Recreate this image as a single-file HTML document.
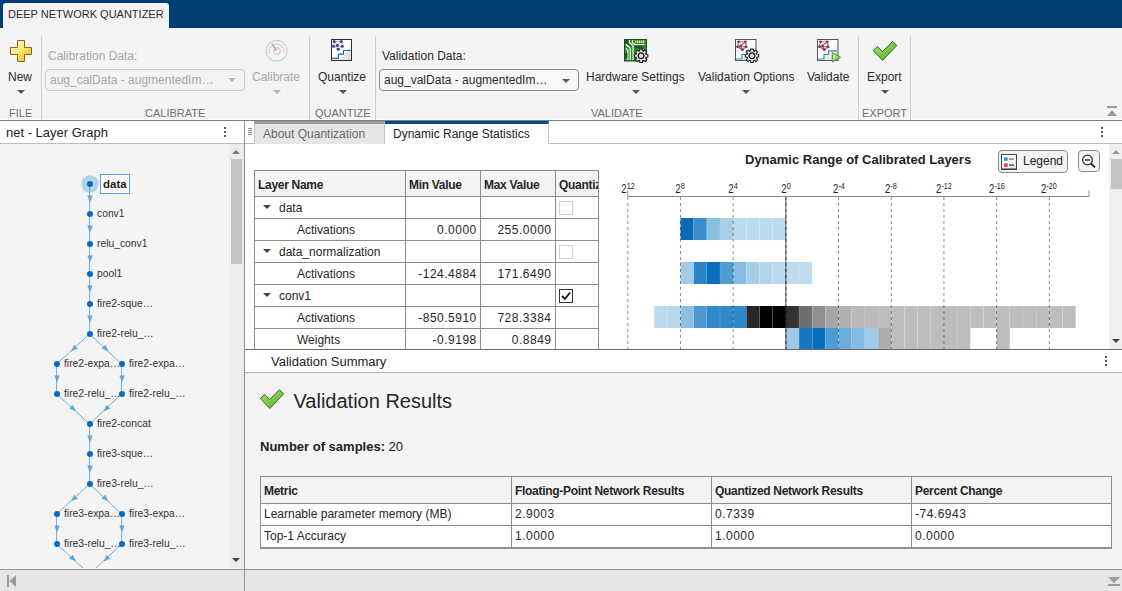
<!DOCTYPE html><html><head><meta charset="utf-8"><style>
*{box-sizing:border-box;margin:0;padding:0}
html,body{width:1122px;height:591px;overflow:hidden;background:#f4f4f4;font-family:"Liberation Sans",sans-serif;color:#333}
.a{position:absolute}
.t{position:absolute;white-space:nowrap;line-height:1}
.sep{position:absolute;top:36px;width:1px;height:84px;background:#cfcfcf}
.lbl{font-size:12px;color:#2b2b2b}
.grp{font-size:11px;color:#6e6e6e}
.dis{color:#a8a8a8}
.tri{position:absolute;width:0;height:0;border-left:4px solid transparent;border-right:4px solid transparent;border-top:4px solid #555}
.combo{position:absolute;height:22px;border:1px solid #8a8a8a;border-radius:4px;background:#f7f7f7}
.gl{font-size:10.3px;color:#333}
.tb{font-size:12px;color:#262626}
.hl{position:absolute;height:1px;background:#8c8c8c}
.vl{position:absolute;width:1px;background:#8c8c8c}
</style></head><body>
<div class="a" style="left:0;top:0;width:1122px;height:28px;background:#003e73"></div>
<div class="a" style="left:3px;top:3px;width:166px;height:25px;background:#f3f3f3;border-radius:3px 3px 0 0"></div>
<div class="t" style="left:8px;top:9px;font-size:11px;color:#2e2e2e">DEEP NETWORK QUANTIZER</div>
<div class="a" style="left:0;top:119px;width:1122px;height:1px;background:#fbfbfb"></div><div class="a" style="left:0;top:120px;width:1122px;height:1px;background:#7e7e7e"></div>
<div class="sep" style="left:41px"></div>
<div class="sep" style="left:309px"></div>
<div class="sep" style="left:375px"></div>
<div class="sep" style="left:858px"></div>
<div class="sep" style="left:910px"></div>
<svg class="a" style="left:0;top:0" width="1122" height="121" viewBox="0 0 1122 121">
<defs>
<linearGradient id="gy" x1="0" y1="0" x2="1" y2="1"><stop offset="0" stop-color="#fffbe6"/><stop offset="0.45" stop-color="#fbe77a"/><stop offset="1" stop-color="#e3b620"/></linearGradient>
<linearGradient id="gg" x1="0" y1="0" x2="1" y2="1"><stop offset="0" stop-color="#b6e27a"/><stop offset="0.5" stop-color="#7cc84a"/><stop offset="1" stop-color="#5aa832"/></linearGradient>
<linearGradient id="gb" x1="0" y1="0" x2="1" y2="1"><stop offset="0.5" stop-color="#ffffff"/><stop offset="1" stop-color="#d0d0d0"/></linearGradient>
<linearGradient id="gp" x1="0" y1="0" x2="1" y2="1"><stop offset="0" stop-color="#d8f0a0"/><stop offset="1" stop-color="#6cbf3a"/></linearGradient>
<g id="gear"><path d="M-1.49,-4.88 L-1.30,-6.68 L1.30,-6.68 L1.49,-4.88 L2.39,-4.50 L3.80,-5.64 L5.64,-3.80 L4.50,-2.39 L4.88,-1.49 L6.68,-1.30 L6.68,1.30 L4.88,1.49 L4.50,2.39 L5.64,3.80 L3.80,5.64 L2.39,4.50 L1.49,4.88 L1.30,6.68 L-1.30,6.68 L-1.49,4.88 L-2.39,4.50 L-3.80,5.64 L-5.64,3.80 L-4.50,2.39 L-4.88,1.49 L-6.68,1.30 L-6.68,-1.30 L-4.88,-1.49 L-4.50,-2.39 L-5.64,-3.80 L-3.80,-5.64 L-2.39,-4.50 Z" fill="#e6e6e6" stroke="#262626" stroke-width="1.1"/><circle r="2.9" fill="#d6d6d6" stroke="#111" stroke-width="1.3"/></g>
<g id="net"><g stroke="#e8553f" stroke-width="0.9" stroke-dasharray="1.5 0.6" fill="none"><path d="M3.2,2.2 L10.3,2.2 L11.3,7 L7.2,10.1 L2.5,7 Z M3.2,2.2 L6.3,6 L10.3,2.2 M2.5,7 L11.3,7 M6.3,6 L7.2,10.1"/></g>
<g fill="#1d4f8f"><circle cx="3.2" cy="2.2" r="1.5"/><circle cx="10.3" cy="2.2" r="1.5"/><circle cx="2.5" cy="7" r="1.5"/><circle cx="6.3" cy="6" r="1.5"/><circle cx="11.3" cy="7" r="1.5"/><circle cx="7.2" cy="10.1" r="1.5"/></g></g>
<g id="net2"><g stroke="#e4452f" stroke-width="1.1" fill="none"><path d="M3.3,2.5 L10.1,2.5 M3.3,2.5 L2.2,7.5 L7,10.5 L11,7.5 L10.1,2.5 M2.2,7.5 L11,7.5 M5.3,6.4 L10.1,2.5 M5.3,6.4 L7,10.5"/></g><path d="M3.3,2.5 L10.1,2.5" stroke="#f4a0a0" stroke-width="2"/>
<g fill="#1d4f8f"><circle cx="3.3" cy="2.5" r="1.3"/><circle cx="10.1" cy="2.5" r="1.3"/><circle cx="2.2" cy="7.5" r="1.3"/><circle cx="5.3" cy="6.4" r="1.3"/><circle cx="11" cy="7.5" r="1.3"/><circle cx="7" cy="10.5" r="1.3"/></g></g>
</defs>
<!-- New plus -->
<path d="M17.5,40.5 h7 v7 h7 v7 h-7 v7 h-7 v-7 h-7 v-7 h7 z" fill="url(#gy)" stroke="#8a6514" stroke-width="1"/>
<!-- calibrate gauge -->
<circle cx="276.7" cy="50.7" r="10.4" fill="#f6f6f6" stroke="#cdcdcd" stroke-width="1.2"/>
<path d="M269.5,53 A7.4,7.4 0 1 1 284,53" fill="none" stroke="#bdbdbd" stroke-width="1.2" stroke-dasharray="1.6 0.8"/>
<circle cx="277" cy="51" r="3.2" fill="none" stroke="#c8c8c8" stroke-width="1.2"/>
<line x1="271.8" y1="43.8" x2="276.5" y2="50.5" stroke="#ef9a9a" stroke-width="1.6"/>
<!-- Quantize -->
<rect x="331.5" y="39.5" width="20" height="21" fill="url(#gb)" stroke="#2e2e2e" stroke-width="1"/>
<path d="M332,58.3 H338.4 V54.2 H343.4 V50.5 H351" fill="none" stroke="#1f6fc0" stroke-width="1.2"/>
<use href="#net" x="331" y="39.2"/>
<!-- Hardware settings -->
<rect x="624.5" y="39.5" width="22" height="21.5" fill="#2d8a30" stroke="#14501a" stroke-width="1"/>
<rect x="625.3" y="40.3" width="2.8" height="3.2" fill="#3a3a3a"/>
<g fill="#e8e070"><rect x="635" y="40.5" width="1.3" height="2.5"/><rect x="637" y="40.5" width="1.3" height="2.5"/><rect x="639" y="40.5" width="1.3" height="2.5"/><rect x="641" y="40.5" width="1.3" height="2.5"/><rect x="643" y="40.5" width="1.3" height="2.5"/></g>
<g stroke="#ffffff" stroke-width="1.1" fill="none"><path d="M629.5,40 V42.5 L633,45.5 V60"/><path d="M632.5,40 V42.5 L634.5,44.5 H644.5"/><path d="M625.8,44.5 L630.2,48 V60"/><path d="M625.8,48.3 L627.8,50 V60"/></g>
<g fill="#333"><rect x="635.2" y="46.2" width="2" height="2"/><rect x="637.8" y="46.2" width="2" height="2"/><rect x="640.4" y="46.2" width="2" height="2"/><rect x="625.3" y="53" width="2" height="5"/></g>
<use href="#gear" x="641.1" y="55.8"/>
<!-- Validation options -->
<rect x="735.5" y="39.5" width="20.5" height="21" fill="url(#gb)" stroke="#555" stroke-width="1"/>
<path d="M736,59 H742 V54.5 H746.5 V50.8 H755" fill="none" stroke="#3a86cc" stroke-width="1.2"/>
<use href="#net2" x="735.3" y="39.3"/>
<use href="#gear" x="752" y="55.8"/>
<!-- Validate -->
<rect x="817.5" y="39.5" width="20.5" height="21" fill="url(#gb)" stroke="#555" stroke-width="1"/>
<path d="M818,59 H824 V54.5 H828.5 V50.8 H837" fill="none" stroke="#3a86cc" stroke-width="1.2"/>
<use href="#net2" x="817.2" y="39.3"/>
<path d="M832.3,52.5 L840.6,57.3 L832.3,62 Z" fill="url(#gp)" stroke="#3d8a2a" stroke-width="0.9"/>
<!-- Export check -->
<path d="M873.3,50.7 L877.4,46.4 L882.7,51.6 L892.6,41.3 L896.8,45.5 L882.6,60.4 Z" fill="url(#gg)" stroke="#2f6a1e" stroke-width="1"/>
<!-- collapse -->
<rect x="1107" y="106" width="10" height="2" fill="#9c9c9c"/>
<path d="M1107,116 L1112,110 L1117,116 Z" fill="#9c9c9c"/>
</svg>
<div class="t lbl" style="left:8px;top:71px">New</div>
<div class="tri" style="left:17px;top:90px"></div>
<div class="t grp" style="left:9px;top:108px">FILE</div>
<div class="t lbl dis" style="left:48px;top:50px">Calibration Data:</div>
<div class="combo" style="left:45px;top:69px;width:200px;border-color:#cdcdcd;background:#f3f3f3"></div>
<div class="t lbl dis" style="left:50px;top:74px">aug_calData - augmentedIm…</div>
<div class="tri" style="left:228px;top:78px;border-top-color:#b5b5b5"></div>
<div class="t lbl dis" style="left:252px;top:71px">Calibrate</div>
<div class="tri" style="left:273px;top:90px;border-top-color:#b5b5b5"></div>
<div class="t grp" style="left:145px;top:108px">CALIBRATE</div>
<div class="t lbl" style="left:318px;top:71px">Quantize</div>
<div class="tri" style="left:339px;top:90px"></div>
<div class="t grp" style="left:315px;top:108px">QUANTIZE</div>
<div class="t lbl" style="left:382px;top:50px">Validation Data:</div>
<div class="combo" style="left:379px;top:69px;width:200px"></div>
<div class="t lbl" style="left:384px;top:74px">aug_valData - augmentedIm…</div>
<div class="tri" style="left:562px;top:78.5px"></div>
<div class="t lbl" style="left:586px;top:71px">Hardware Settings</div>
<div class="tri" style="left:632px;top:90px"></div>
<div class="t lbl" style="left:698px;top:71px">Validation Options</div>
<div class="tri" style="left:742px;top:90px"></div>
<div class="t lbl" style="left:807px;top:71px">Validate</div>
<div class="t grp" style="left:591px;top:108px">VALIDATE</div>
<div class="t lbl" style="left:867px;top:71px">Export</div>
<div class="tri" style="left:881px;top:90px"></div>
<div class="t grp" style="left:862px;top:108px">EXPORT</div>
<div class="a" style="left:0;top:121px;width:244px;height:23px;background:#fff;border-bottom:1px solid #bdbdbd"></div>
<div class="t" style="left:6px;top:126px;font-size:13px;color:#222">net - Layer Graph</div>
<div class="a" style="left:224px;top:127px;width:2px;height:2px;background:#555"></div><div class="a" style="left:224px;top:131px;width:2px;height:2px;background:#555"></div><div class="a" style="left:224px;top:135px;width:2px;height:2px;background:#555"></div>
<div class="a" style="left:229px;top:144px;width:15px;height:424px;background:#ececec"></div>
<div class="a" style="left:231px;top:159px;width:11px;height:105px;background:#c4c4c4"></div>
<div class="tri" style="left:232px;top:150px;border-top:0;border-bottom:4px solid #777"></div>
<div class="tri" style="left:232px;top:558px;border-top-color:#444"></div>
<svg class="a" style="left:0;top:144px" width="229" height="424" viewBox="0 144 229 424"><circle cx="90" cy="184" r="8.8" fill="#b3d1e8"/><line x1="89.6" y1="184" x2="89.6" y2="214" stroke="#6eb0e0" stroke-width="1"/><path d="M90.00,202.50 L87.30,195.50 L92.70,195.50 Z" fill="#5ea6dc"/><line x1="89.6" y1="214" x2="89.6" y2="244" stroke="#6eb0e0" stroke-width="1"/><path d="M90.00,232.50 L87.30,225.50 L92.70,225.50 Z" fill="#5ea6dc"/><line x1="89.6" y1="244" x2="89.6" y2="274" stroke="#6eb0e0" stroke-width="1"/><path d="M90.00,262.50 L87.30,255.50 L92.70,255.50 Z" fill="#5ea6dc"/><line x1="89.6" y1="274" x2="89.6" y2="304" stroke="#6eb0e0" stroke-width="1"/><path d="M90.00,292.50 L87.30,285.50 L92.70,285.50 Z" fill="#5ea6dc"/><line x1="89.6" y1="304" x2="89.6" y2="334" stroke="#6eb0e0" stroke-width="1"/><path d="M90.00,322.50 L87.30,315.50 L92.70,315.50 Z" fill="#5ea6dc"/><line x1="89.6" y1="334" x2="56.6" y2="364" stroke="#6eb0e0" stroke-width="1"/><path d="M70.91,351.35 L74.27,344.65 L77.91,348.64 Z" fill="#5ea6dc"/><line x1="89.6" y1="334" x2="121.6" y2="364" stroke="#6eb0e0" stroke-width="1"/><path d="M108.55,351.39 L101.60,348.58 L105.29,344.64 Z" fill="#5ea6dc"/><line x1="56.6" y1="364" x2="56.6" y2="394" stroke="#6eb0e0" stroke-width="1"/><path d="M57.00,382.50 L54.30,375.50 L59.70,375.50 Z" fill="#5ea6dc"/><line x1="121.6" y1="364" x2="121.6" y2="394" stroke="#6eb0e0" stroke-width="1"/><path d="M122.00,382.50 L119.30,375.50 L124.70,375.50 Z" fill="#5ea6dc"/><line x1="56.6" y1="394" x2="89.6" y2="424" stroke="#6eb0e0" stroke-width="1"/><path d="M76.09,411.35 L69.09,408.64 L72.73,404.65 Z" fill="#5ea6dc"/><line x1="121.6" y1="394" x2="89.6" y2="424" stroke="#6eb0e0" stroke-width="1"/><path d="M103.45,411.39 L106.71,404.64 L110.40,408.58 Z" fill="#5ea6dc"/><line x1="89.6" y1="424" x2="89.6" y2="454" stroke="#6eb0e0" stroke-width="1"/><path d="M90.00,442.50 L87.30,435.50 L92.70,435.50 Z" fill="#5ea6dc"/><line x1="89.6" y1="454" x2="89.6" y2="484" stroke="#6eb0e0" stroke-width="1"/><path d="M90.00,472.50 L87.30,465.50 L92.70,465.50 Z" fill="#5ea6dc"/><line x1="89.6" y1="484" x2="56.6" y2="514" stroke="#6eb0e0" stroke-width="1"/><path d="M70.91,501.35 L74.27,494.65 L77.91,498.64 Z" fill="#5ea6dc"/><line x1="89.6" y1="484" x2="121.6" y2="514" stroke="#6eb0e0" stroke-width="1"/><path d="M108.55,501.39 L101.60,498.58 L105.29,494.64 Z" fill="#5ea6dc"/><line x1="56.6" y1="514" x2="56.6" y2="544" stroke="#6eb0e0" stroke-width="1"/><path d="M57.00,532.50 L54.30,525.50 L59.70,525.50 Z" fill="#5ea6dc"/><line x1="121.6" y1="514" x2="121.6" y2="544" stroke="#6eb0e0" stroke-width="1"/><path d="M122.00,532.50 L119.30,525.50 L124.70,525.50 Z" fill="#5ea6dc"/><line x1="56.6" y1="544" x2="89.6" y2="574" stroke="#6eb0e0" stroke-width="1"/><path d="M76.09,561.35 L69.09,558.64 L72.73,554.65 Z" fill="#5ea6dc"/><line x1="121.6" y1="544" x2="89.6" y2="574" stroke="#6eb0e0" stroke-width="1"/><path d="M103.45,561.39 L106.71,554.64 L110.40,558.58 Z" fill="#5ea6dc"/><circle cx="90" cy="184" r="3" fill="#0a6abf"/><circle cx="90" cy="214" r="3" fill="#0a6abf"/><circle cx="90" cy="244" r="3" fill="#0a6abf"/><circle cx="90" cy="274" r="3" fill="#0a6abf"/><circle cx="90" cy="304" r="3" fill="#0a6abf"/><circle cx="90" cy="334" r="3" fill="#0a6abf"/><circle cx="57" cy="364" r="3" fill="#0a6abf"/><circle cx="122" cy="364" r="3" fill="#0a6abf"/><circle cx="57" cy="394" r="3" fill="#0a6abf"/><circle cx="122" cy="394" r="3" fill="#0a6abf"/><circle cx="90" cy="424" r="3" fill="#0a6abf"/><circle cx="90" cy="454" r="3" fill="#0a6abf"/><circle cx="90" cy="484" r="3" fill="#0a6abf"/><circle cx="57" cy="514" r="3" fill="#0a6abf"/><circle cx="122" cy="514" r="3" fill="#0a6abf"/><circle cx="57" cy="544" r="3" fill="#0a6abf"/><circle cx="122" cy="544" r="3" fill="#0a6abf"/></svg>
<div class="a" style="left:100px;top:174px;width:30px;height:20px;background:#fff;border:1px solid #5aa0d8"></div>
<div class="t" style="left:103px;top:178.5px;font-size:11.5px;font-weight:bold;color:#222">data</div>
<div class="t gl" style="left:97px;top:209px">conv1</div>
<div class="t gl" style="left:97px;top:239px">relu_conv1</div>
<div class="t gl" style="left:97px;top:269px">pool1</div>
<div class="t gl" style="left:97px;top:299px">fire2-sque…</div>
<div class="t gl" style="left:97px;top:329px">fire2-relu_…</div>
<div class="t gl" style="left:64px;top:359px">fire2-expa…</div>
<div class="t gl" style="left:129px;top:359px">fire2-expa…</div>
<div class="t gl" style="left:64px;top:389px">fire2-relu_…</div>
<div class="t gl" style="left:129px;top:389px">fire2-relu_…</div>
<div class="t gl" style="left:97px;top:419px">fire2-concat</div>
<div class="t gl" style="left:97px;top:449px">fire3-sque…</div>
<div class="t gl" style="left:97px;top:479px">fire3-relu_…</div>
<div class="t gl" style="left:64px;top:509px">fire3-expa…</div>
<div class="t gl" style="left:129px;top:509px">fire3-expa…</div>
<div class="t gl" style="left:64px;top:539px">fire3-relu_…</div>
<div class="t gl" style="left:129px;top:539px">fire3-relu_…</div>
<div class="a" style="left:244px;top:121px;width:1px;height:470px;background:#8f8f8f"></div>
<div class="a" style="left:0;top:568px;width:1122px;height:1px;background:#f8f8f8"></div><div class="a" style="left:0;top:569px;width:1122px;height:22px;background:#e6e6e6;border-top:1px solid #8e8e8e"></div>
<div class="a" style="left:244px;top:568px;width:1px;height:23px;background:#8f8f8f"></div>
<svg class="a" style="left:0;top:568px" width="30" height="23"><rect x="7" y="7" width="2" height="12" fill="#9a9a9a"/><path d="M16,7 L9.5,13 L16,19 Z" fill="#9a9a9a"/></svg>
<svg class="a" style="left:1100px;top:569px" width="22" height="22"><path d="M8,8 L20,8 L14,14.3 Z" fill="#9c9c9c"/><rect x="8" y="15" width="12" height="2" fill="#9c9c9c"/></svg>
<div class="a" style="left:245px;top:121px;width:877px;height:228px;background:#fff"></div>
<div class="a" style="left:245px;top:143px;width:877px;height:1px;background:#bdbdbd"></div>
<svg class="a" style="left:248px;top:128px" width="6" height="8"><g fill="#888"><rect y="0" width="4" height="1"/><rect y="2" width="4" height="1"/><rect y="4" width="4" height="1"/><rect y="6" width="4" height="1"/></g></svg>
<div class="a" style="left:254px;top:121px;width:131px;height:23px;background:#e6e6e6;border-top:3px solid #9a9a9a;border-right:1px solid #c4c4c4;border-left:1px solid #c4c4c4"></div>
<div class="t" style="left:263px;top:128px;font-size:12px;color:#6a6a6a">About Quantization</div>
<div class="a" style="left:385px;top:121px;width:164px;height:23px;background:#fff;border-top:3px solid #004b8d;border-right:1px solid #c4c4c4"></div>
<div class="t" style="left:393px;top:128px;font-size:12px;color:#222">Dynamic Range Statistics</div>
<div class="a" style="left:1101px;top:127px;width:2px;height:2px;background:#555"></div><div class="a" style="left:1101px;top:131px;width:2px;height:2px;background:#555"></div><div class="a" style="left:1101px;top:135px;width:2px;height:2px;background:#555"></div>
<div class="a" style="left:255px;top:170px;width:343px;height:26px;background:#f3f3f3"></div><div class="vl" style="left:254px;top:170px;height:179px"></div><div class="vl" style="left:405px;top:170px;height:179px"></div><div class="vl" style="left:480px;top:170px;height:179px"></div><div class="vl" style="left:555px;top:170px;height:179px"></div><div class="vl" style="left:598px;top:170px;height:179px"></div><div class="hl" style="left:254px;top:170px;width:345px"></div><div class="hl" style="left:254px;top:196px;width:345px"></div><div class="hl" style="left:254px;top:218px;width:345px"></div><div class="hl" style="left:254px;top:240px;width:345px"></div><div class="hl" style="left:254px;top:262px;width:345px"></div><div class="hl" style="left:254px;top:284px;width:345px"></div><div class="hl" style="left:254px;top:306px;width:345px"></div><div class="hl" style="left:254px;top:328px;width:345px"></div><div class="a" style="left:255px;top:171px;width:343px;height:178px;overflow:hidden"><div class="t tb" style="left:3px;top:8px;font-weight:bold;letter-spacing:-0.3px">Layer Name</div><div class="t tb" style="left:154px;top:8px;font-weight:bold;letter-spacing:-0.3px">Min Value</div><div class="t tb" style="left:229px;top:8px;font-weight:bold;letter-spacing:-0.3px">Max Value</div><div class="t tb" style="left:304px;top:8px;font-weight:bold;letter-spacing:-0.3px">Quantize</div></div><div class="tri" style="left:263px;top:205px;border-top-color:#444"></div><div class="t tb" style="left:279px;top:202px">data</div><div class="a" style="left:559px;top:201px;width:14px;height:14px;border:1px solid #d0d0d0;background:#fff"></div><div class="t tb" style="left:297px;top:224px">Activations</div><div class="t tb" style="left:405px;width:71.8px;text-align:right;top:224px;letter-spacing:0.5px">0.0000</div><div class="t tb" style="left:480px;width:71.5px;text-align:right;top:224px;letter-spacing:0.5px">255.0000</div><div class="tri" style="left:263px;top:249px;border-top-color:#444"></div><div class="t tb" style="left:279px;top:246px">data_normalization</div><div class="a" style="left:559px;top:245px;width:14px;height:14px;border:1px solid #d0d0d0;background:#fff"></div><div class="t tb" style="left:297px;top:268px">Activations</div><div class="t tb" style="left:405px;width:71.8px;text-align:right;top:268px;letter-spacing:0.5px">-124.4884</div><div class="t tb" style="left:480px;width:71.5px;text-align:right;top:268px;letter-spacing:0.5px">171.6490</div><div class="tri" style="left:263px;top:293px;border-top-color:#444"></div><div class="t tb" style="left:279px;top:290px">conv1</div><div class="a" style="left:559px;top:289px;width:14px;height:14px;border:1px solid #333;background:#fff"></div><svg class="a" style="left:559px;top:289px" width="14" height="14"><path d="M3,7 L6,10 L11,3.5" fill="none" stroke="#111" stroke-width="1.8"/></svg><div class="t tb" style="left:297px;top:312px">Activations</div><div class="t tb" style="left:405px;width:71.8px;text-align:right;top:312px;letter-spacing:0.5px">-850.5910</div><div class="t tb" style="left:480px;width:71.5px;text-align:right;top:312px;letter-spacing:0.5px">728.3384</div><div class="t tb" style="left:297px;top:334px">Weights</div><div class="t tb" style="left:405px;width:71.8px;text-align:right;top:334px;letter-spacing:0.5px">-0.9198</div><div class="t tb" style="left:480px;width:71.5px;text-align:right;top:334px;letter-spacing:0.5px">0.8849</div>
<svg class="a" style="left:599px;top:144px" width="510" height="205" viewBox="599 144 510 205"><rect x="680.49" y="218" width="13.17" height="22" fill="#0a6ab5"/>
<rect x="693.66" y="218" width="13.17" height="22" fill="#3a8ecb"/>
<rect x="693.36" y="218" width="0.6" height="22" fill="rgba(255,255,255,0.2)"/>
<rect x="706.83" y="218" width="13.17" height="22" fill="#8bbfe0"/>
<rect x="706.53" y="218" width="0.6" height="22" fill="rgba(255,255,255,0.2)"/>
<rect x="720.01" y="218" width="13.17" height="22" fill="#a9d0e8"/>
<rect x="719.71" y="218" width="0.6" height="22" fill="rgba(255,255,255,0.2)"/>
<rect x="733.18" y="218" width="13.17" height="22" fill="#bcdbee"/>
<rect x="732.88" y="218" width="0.6" height="22" fill="rgba(255,255,255,0.2)"/>
<rect x="746.35" y="218" width="13.17" height="22" fill="#bcdbee"/>
<rect x="746.05" y="218" width="0.6" height="22" fill="rgba(255,255,255,0.2)"/>
<rect x="759.52" y="218" width="13.17" height="22" fill="#bcdbee"/>
<rect x="759.23" y="218" width="0.6" height="22" fill="rgba(255,255,255,0.2)"/>
<rect x="772.70" y="218" width="13.17" height="22" fill="#bcdbee"/>
<rect x="772.40" y="218" width="0.6" height="22" fill="rgba(255,255,255,0.2)"/>
<rect x="680.49" y="262" width="13.17" height="22" fill="#a3cbe6"/>
<rect x="693.66" y="262" width="13.17" height="22" fill="#2a84c8"/>
<rect x="693.36" y="262" width="0.6" height="22" fill="rgba(255,255,255,0.2)"/>
<rect x="706.83" y="262" width="13.17" height="22" fill="#0a6fbf"/>
<rect x="706.53" y="262" width="0.6" height="22" fill="rgba(255,255,255,0.2)"/>
<rect x="720.01" y="262" width="13.17" height="22" fill="#509bd0"/>
<rect x="719.71" y="262" width="0.6" height="22" fill="rgba(255,255,255,0.2)"/>
<rect x="733.18" y="262" width="13.17" height="22" fill="#87bde3"/>
<rect x="732.88" y="262" width="0.6" height="22" fill="rgba(255,255,255,0.2)"/>
<rect x="746.35" y="262" width="13.17" height="22" fill="#a6cfe9"/>
<rect x="746.05" y="262" width="0.6" height="22" fill="rgba(255,255,255,0.2)"/>
<rect x="759.52" y="262" width="13.17" height="22" fill="#b4d6ec"/>
<rect x="759.23" y="262" width="0.6" height="22" fill="rgba(255,255,255,0.2)"/>
<rect x="772.70" y="262" width="13.17" height="22" fill="#bad9ed"/>
<rect x="772.40" y="262" width="0.6" height="22" fill="rgba(255,255,255,0.2)"/>
<rect x="785.87" y="262" width="13.17" height="22" fill="#c0ddef"/>
<rect x="785.57" y="262" width="0.6" height="22" fill="rgba(255,255,255,0.2)"/>
<rect x="799.04" y="262" width="13.17" height="22" fill="#c0ddef"/>
<rect x="798.74" y="262" width="0.6" height="22" fill="rgba(255,255,255,0.2)"/>
<rect x="654.14" y="306" width="13.17" height="22" fill="#bcdbef"/>
<rect x="667.32" y="306" width="13.17" height="22" fill="#b8d8ed"/>
<rect x="667.02" y="306" width="0.6" height="22" fill="rgba(255,255,255,0.2)"/>
<rect x="680.49" y="306" width="13.17" height="22" fill="#8fc0e2"/>
<rect x="680.19" y="306" width="0.6" height="22" fill="rgba(255,255,255,0.2)"/>
<rect x="693.66" y="306" width="13.17" height="22" fill="#4c99d1"/>
<rect x="693.36" y="306" width="0.6" height="22" fill="rgba(255,255,255,0.2)"/>
<rect x="706.83" y="306" width="13.17" height="22" fill="#2f88c8"/>
<rect x="706.53" y="306" width="0.6" height="22" fill="rgba(255,255,255,0.2)"/>
<rect x="720.01" y="306" width="13.17" height="22" fill="#2f88c8"/>
<rect x="719.71" y="306" width="0.6" height="22" fill="rgba(255,255,255,0.2)"/>
<rect x="733.18" y="306" width="13.17" height="22" fill="#2f88c8"/>
<rect x="732.88" y="306" width="0.6" height="22" fill="rgba(255,255,255,0.2)"/>
<rect x="746.35" y="306" width="13.17" height="22" fill="#262626"/>
<rect x="746.05" y="306" width="0.6" height="22" fill="rgba(255,255,255,0.2)"/>
<rect x="759.52" y="306" width="13.17" height="22" fill="#000000"/>
<rect x="759.23" y="306" width="0.6" height="22" fill="rgba(255,255,255,0.2)"/>
<rect x="772.70" y="306" width="13.17" height="22" fill="#000000"/>
<rect x="772.40" y="306" width="0.6" height="22" fill="rgba(255,255,255,0.2)"/>
<rect x="785.87" y="306" width="13.17" height="22" fill="#333333"/>
<rect x="785.57" y="306" width="0.6" height="22" fill="rgba(255,255,255,0.2)"/>
<rect x="799.04" y="306" width="13.17" height="22" fill="#6e6e6e"/>
<rect x="798.74" y="306" width="0.6" height="22" fill="rgba(255,255,255,0.2)"/>
<rect x="812.21" y="306" width="13.17" height="22" fill="#8f8f8f"/>
<rect x="811.91" y="306" width="0.6" height="22" fill="rgba(255,255,255,0.2)"/>
<rect x="825.39" y="306" width="13.17" height="22" fill="#a6a6a6"/>
<rect x="825.09" y="306" width="0.6" height="22" fill="rgba(255,255,255,0.2)"/>
<rect x="838.56" y="306" width="13.17" height="22" fill="#b0b0b0"/>
<rect x="838.26" y="306" width="0.6" height="22" fill="rgba(255,255,255,0.2)"/>
<rect x="851.73" y="306" width="13.17" height="22" fill="#b8b8b8"/>
<rect x="851.43" y="306" width="0.6" height="22" fill="rgba(255,255,255,0.2)"/>
<rect x="864.90" y="306" width="13.17" height="22" fill="#bbbbbb"/>
<rect x="864.61" y="306" width="0.6" height="22" fill="rgba(255,255,255,0.2)"/>
<rect x="878.08" y="306" width="13.17" height="22" fill="#bdbdbd"/>
<rect x="877.78" y="306" width="0.6" height="22" fill="rgba(255,255,255,0.2)"/>
<rect x="891.25" y="306" width="13.17" height="22" fill="#bdbdbd"/>
<rect x="890.95" y="306" width="0.6" height="22" fill="rgba(255,255,255,0.2)"/>
<rect x="904.42" y="306" width="13.17" height="22" fill="#bdbdbd"/>
<rect x="904.12" y="306" width="0.6" height="22" fill="rgba(255,255,255,0.2)"/>
<rect x="917.59" y="306" width="13.17" height="22" fill="#bdbdbd"/>
<rect x="917.29" y="306" width="0.6" height="22" fill="rgba(255,255,255,0.2)"/>
<rect x="930.77" y="306" width="13.17" height="22" fill="#bdbdbd"/>
<rect x="930.47" y="306" width="0.6" height="22" fill="rgba(255,255,255,0.2)"/>
<rect x="943.94" y="306" width="13.17" height="22" fill="#bdbdbd"/>
<rect x="943.64" y="306" width="0.6" height="22" fill="rgba(255,255,255,0.2)"/>
<rect x="957.11" y="306" width="13.17" height="22" fill="#bdbdbd"/>
<rect x="956.81" y="306" width="0.6" height="22" fill="rgba(255,255,255,0.2)"/>
<rect x="970.28" y="306" width="13.17" height="22" fill="#bdbdbd"/>
<rect x="969.99" y="306" width="0.6" height="22" fill="rgba(255,255,255,0.2)"/>
<rect x="983.46" y="306" width="13.17" height="22" fill="#bdbdbd"/>
<rect x="983.16" y="306" width="0.6" height="22" fill="rgba(255,255,255,0.2)"/>
<rect x="996.63" y="306" width="13.17" height="22" fill="#bdbdbd"/>
<rect x="996.33" y="306" width="0.6" height="22" fill="rgba(255,255,255,0.2)"/>
<rect x="1009.80" y="306" width="13.17" height="22" fill="#bdbdbd"/>
<rect x="1009.50" y="306" width="0.6" height="22" fill="rgba(255,255,255,0.2)"/>
<rect x="1022.97" y="306" width="13.17" height="22" fill="#bdbdbd"/>
<rect x="1022.67" y="306" width="0.6" height="22" fill="rgba(255,255,255,0.2)"/>
<rect x="1036.15" y="306" width="13.17" height="22" fill="#bdbdbd"/>
<rect x="1035.85" y="306" width="0.6" height="22" fill="rgba(255,255,255,0.2)"/>
<rect x="1049.32" y="306" width="13.17" height="22" fill="#bdbdbd"/>
<rect x="1049.02" y="306" width="0.6" height="22" fill="rgba(255,255,255,0.2)"/>
<rect x="1062.49" y="306" width="13.17" height="22" fill="#bdbdbd"/>
<rect x="1062.19" y="306" width="0.6" height="22" fill="rgba(255,255,255,0.2)"/>
<rect x="785.87" y="328" width="13.17" height="22" fill="#9dc8e9"/>
<rect x="799.04" y="328" width="13.17" height="22" fill="#1876c2"/>
<rect x="798.74" y="328" width="0.6" height="22" fill="rgba(255,255,255,0.2)"/>
<rect x="812.21" y="328" width="13.17" height="22" fill="#0670bf"/>
<rect x="811.91" y="328" width="0.6" height="22" fill="rgba(255,255,255,0.2)"/>
<rect x="825.39" y="328" width="13.17" height="22" fill="#4e9bd2"/>
<rect x="825.09" y="328" width="0.6" height="22" fill="rgba(255,255,255,0.2)"/>
<rect x="838.56" y="328" width="13.17" height="22" fill="#6aabdb"/>
<rect x="838.26" y="328" width="0.6" height="22" fill="rgba(255,255,255,0.2)"/>
<rect x="851.73" y="328" width="13.17" height="22" fill="#84bbe3"/>
<rect x="851.43" y="328" width="0.6" height="22" fill="rgba(255,255,255,0.2)"/>
<rect x="864.90" y="328" width="13.17" height="22" fill="#a2cbe9"/>
<rect x="864.61" y="328" width="0.6" height="22" fill="rgba(255,255,255,0.2)"/>
<rect x="878.08" y="328" width="13.17" height="22" fill="#adadad"/>
<rect x="877.78" y="328" width="0.6" height="22" fill="rgba(255,255,255,0.2)"/>
<rect x="891.25" y="328" width="13.17" height="22" fill="#bdbdbd"/>
<rect x="890.95" y="328" width="0.6" height="22" fill="rgba(255,255,255,0.2)"/>
<rect x="904.42" y="328" width="13.17" height="22" fill="#bdbdbd"/>
<rect x="904.12" y="328" width="0.6" height="22" fill="rgba(255,255,255,0.2)"/>
<rect x="917.59" y="328" width="13.17" height="22" fill="#bdbdbd"/>
<rect x="917.29" y="328" width="0.6" height="22" fill="rgba(255,255,255,0.2)"/>
<rect x="930.77" y="328" width="13.17" height="22" fill="#bdbdbd"/>
<rect x="930.47" y="328" width="0.6" height="22" fill="rgba(255,255,255,0.2)"/>
<rect x="943.94" y="328" width="13.17" height="22" fill="#bdbdbd"/>
<rect x="943.64" y="328" width="0.6" height="22" fill="rgba(255,255,255,0.2)"/>
<rect x="957.11" y="328" width="13.17" height="22" fill="#bdbdbd"/>
<rect x="956.81" y="328" width="0.6" height="22" fill="rgba(255,255,255,0.2)"/>
<rect x="996.63" y="328" width="13.17" height="22" fill="#bdbdbd"/>
<line x1="627.80" y1="197" x2="627.80" y2="349" stroke="rgba(0,0,0,0.45)" stroke-width="1" stroke-dasharray="3 3"/><line x1="680.49" y1="197" x2="680.49" y2="349" stroke="rgba(0,0,0,0.45)" stroke-width="1" stroke-dasharray="3 3"/><line x1="733.18" y1="197" x2="733.18" y2="349" stroke="rgba(0,0,0,0.45)" stroke-width="1" stroke-dasharray="3 3"/><line x1="785.87" y1="196" x2="785.87" y2="349" stroke="rgba(0,0,0,0.55)" stroke-width="1.2"/><line x1="785.87" y1="197" x2="785.87" y2="349" stroke="rgba(0,0,0,0.5)" stroke-width="1.2" stroke-dasharray="3 3"/><line x1="838.56" y1="197" x2="838.56" y2="349" stroke="rgba(0,0,0,0.45)" stroke-width="1" stroke-dasharray="3 3"/><line x1="891.25" y1="197" x2="891.25" y2="349" stroke="rgba(0,0,0,0.45)" stroke-width="1" stroke-dasharray="3 3"/><line x1="943.94" y1="197" x2="943.94" y2="349" stroke="rgba(0,0,0,0.45)" stroke-width="1" stroke-dasharray="3 3"/><line x1="996.63" y1="197" x2="996.63" y2="349" stroke="rgba(0,0,0,0.45)" stroke-width="1" stroke-dasharray="3 3"/><line x1="1049.32" y1="197" x2="1049.32" y2="349" stroke="rgba(0,0,0,0.45)" stroke-width="1" stroke-dasharray="3 3"/><path d="M627.8,190.5 V196.5 H1089 V190.5" fill="none" stroke="#8a8a8a" stroke-width="1"/></svg>
<div class="t" style="left:597.80px;width:60px;text-align:center;top:183px;font-size:12px;color:#222;transform:scaleX(0.8)">2<span style="font-size:9px;position:relative;top:-4px">12</span></div>
<div class="t" style="left:650.49px;width:60px;text-align:center;top:183px;font-size:12px;color:#222;transform:scaleX(0.8)">2<span style="font-size:9px;position:relative;top:-4px">8</span></div>
<div class="t" style="left:703.18px;width:60px;text-align:center;top:183px;font-size:12px;color:#222;transform:scaleX(0.8)">2<span style="font-size:9px;position:relative;top:-4px">4</span></div>
<div class="t" style="left:755.87px;width:60px;text-align:center;top:183px;font-size:12px;color:#222;transform:scaleX(0.8)">2<span style="font-size:9px;position:relative;top:-4px">0</span></div>
<div class="t" style="left:808.56px;width:60px;text-align:center;top:183px;font-size:12px;color:#222;transform:scaleX(0.8)">2<span style="font-size:9px;position:relative;top:-4px">-4</span></div>
<div class="t" style="left:861.25px;width:60px;text-align:center;top:183px;font-size:12px;color:#222;transform:scaleX(0.8)">2<span style="font-size:9px;position:relative;top:-4px">-8</span></div>
<div class="t" style="left:913.94px;width:60px;text-align:center;top:183px;font-size:12px;color:#222;transform:scaleX(0.8)">2<span style="font-size:9px;position:relative;top:-4px">-12</span></div>
<div class="t" style="left:966.63px;width:60px;text-align:center;top:183px;font-size:12px;color:#222;transform:scaleX(0.8)">2<span style="font-size:9px;position:relative;top:-4px">-16</span></div>
<div class="t" style="left:1019.32px;width:60px;text-align:center;top:183px;font-size:12px;color:#222;transform:scaleX(0.8)">2<span style="font-size:9px;position:relative;top:-4px">-20</span></div>
<div class="t" style="left:745px;top:153px;font-size:13px;font-weight:bold;color:#222">Dynamic Range of Calibrated Layers</div>
<div class="a" style="left:998px;top:150px;width:70px;height:23px;border:1px solid #8a8a8a;border-radius:4px;background:#f3f3f3"></div>
<svg class="a" style="left:1001px;top:154px" width="17" height="17"><defs><linearGradient id="lg" x1="0" y1="0" x2="1" y2="1"><stop offset="0.4" stop-color="#fff"/><stop offset="1" stop-color="#d8d8d8"/></linearGradient></defs><rect x="0.5" y="0.5" width="15" height="15" fill="url(#lg)" stroke="#444"/><rect x="0.5" y="14.5" width="15" height="1.2" fill="#333"/><rect x="3" y="3.3" width="3.7" height="3.5" fill="#3a8fd9"/><rect x="3" y="9.3" width="3.7" height="3.7" fill="#e0503a"/><rect x="8" y="4.5" width="5" height="1" fill="#444"/><rect x="8" y="10.5" width="5" height="1.2" fill="#333"/></svg>
<div class="t" style="left:1023px;top:155px;font-size:12px;color:#222">Legend</div>
<div class="a" style="left:1078px;top:150px;width:22px;height:22px;border:1px solid #8a8a8a;border-radius:4px;background:#f3f3f3"></div>
<svg class="a" style="left:1078px;top:150px" width="22" height="22"><circle cx="9.5" cy="10" r="4.8" fill="#eef5fb" stroke="#2a2a2a" stroke-width="1.2"/><rect x="7" y="9.3" width="5" height="1.4" fill="#222"/><line x1="13" y1="13.5" x2="17" y2="17.3" stroke="#222" stroke-width="1.8"/></svg>
<div class="a" style="left:1109px;top:144px;width:13px;height:205px;background:#efefef"></div>
<div class="a" style="left:1111px;top:159px;width:11px;height:30px;background:#c4c4c4"></div>
<div class="tri" style="left:1112px;top:150px;border-top:0;border-bottom:4px solid #999"></div>
<div class="tri" style="left:1112px;top:339px;border-top-color:#444"></div>
<div class="a" style="left:245px;top:349px;width:877px;height:1px;background:#6a6a6a"></div>
<div class="a" style="left:245px;top:350px;width:877px;height:23px;background:#fff;border-bottom:1px solid #b0b0b0"></div>
<div class="t" style="left:271px;top:355px;font-size:13px;color:#222">Validation Summary</div>
<div class="a" style="left:1105px;top:356px;width:2px;height:2px;background:#555"></div><div class="a" style="left:1105px;top:360px;width:2px;height:2px;background:#555"></div><div class="a" style="left:1105px;top:364px;width:2px;height:2px;background:#555"></div>
<svg class="a" style="left:258px;top:388px" width="28" height="24" viewBox="258 388 28 24"><path d="M260.5,398.5 L264.6,394.5 L269.8,399.6 L279.5,389.7 L283.6,393.8 L269.8,408.6 Z" fill="url(#gg2)" stroke="#2f6a1e" stroke-width="1"/><defs><linearGradient id="gg2" x1="0" y1="0" x2="1" y2="1"><stop offset="0" stop-color="#b6e27a"/><stop offset="0.5" stop-color="#7cc84a"/><stop offset="1" stop-color="#5aa832"/></linearGradient></defs></svg>
<div class="t" style="left:293.5px;top:391px;font-size:20px;color:#262626">Validation Results</div>
<div class="t" style="left:260px;top:440px;font-size:13px;color:#222"><b>Number of samples:</b> 20</div>
<div class="a" style="left:261px;top:477px;width:850px;height:27px;background:#f3f3f3"></div><div class="a" style="left:261px;top:504px;width:850px;height:43px;background:#fff"></div><div class="vl" style="left:260px;top:476px;height:72px"></div><div class="vl" style="left:511px;top:476px;height:72px"></div><div class="vl" style="left:711px;top:476px;height:72px"></div><div class="vl" style="left:911px;top:476px;height:72px"></div><div class="vl" style="left:1111px;top:476px;height:72px"></div><div class="hl" style="left:260px;top:476px;width:852px;height:1px"></div><div class="hl" style="left:260px;top:503px;width:852px;height:1px"></div><div class="hl" style="left:260px;top:525px;width:852px;height:1px"></div><div class="hl" style="left:260px;top:547px;width:852px;height:2px"></div><div class="t tb" style="left:264px;top:485px;font-weight:bold;letter-spacing:-0.3px">Metric</div><div class="t tb" style="left:264px;top:508px">Learnable parameter memory (MB)</div><div class="t tb" style="left:264px;top:530px">Top-1 Accuracy</div><div class="t tb" style="left:515px;top:485px;font-weight:bold;letter-spacing:-0.3px">Floating-Point Network Results</div><div class="t tb" style="left:515px;top:508px;letter-spacing:0.5px">2.9003</div><div class="t tb" style="left:515px;top:530px;letter-spacing:0.5px">1.0000</div><div class="t tb" style="left:715px;top:485px;font-weight:bold;letter-spacing:-0.3px">Quantized Network Results</div><div class="t tb" style="left:715px;top:508px;letter-spacing:0.5px">0.7339</div><div class="t tb" style="left:715px;top:530px;letter-spacing:0.5px">1.0000</div><div class="t tb" style="left:915px;top:485px;font-weight:bold;letter-spacing:-0.3px">Percent Change</div><div class="t tb" style="left:915px;top:508px;letter-spacing:0.5px">-74.6943</div><div class="t tb" style="left:915px;top:530px;letter-spacing:0.5px">0.0000</div>
</body></html>
